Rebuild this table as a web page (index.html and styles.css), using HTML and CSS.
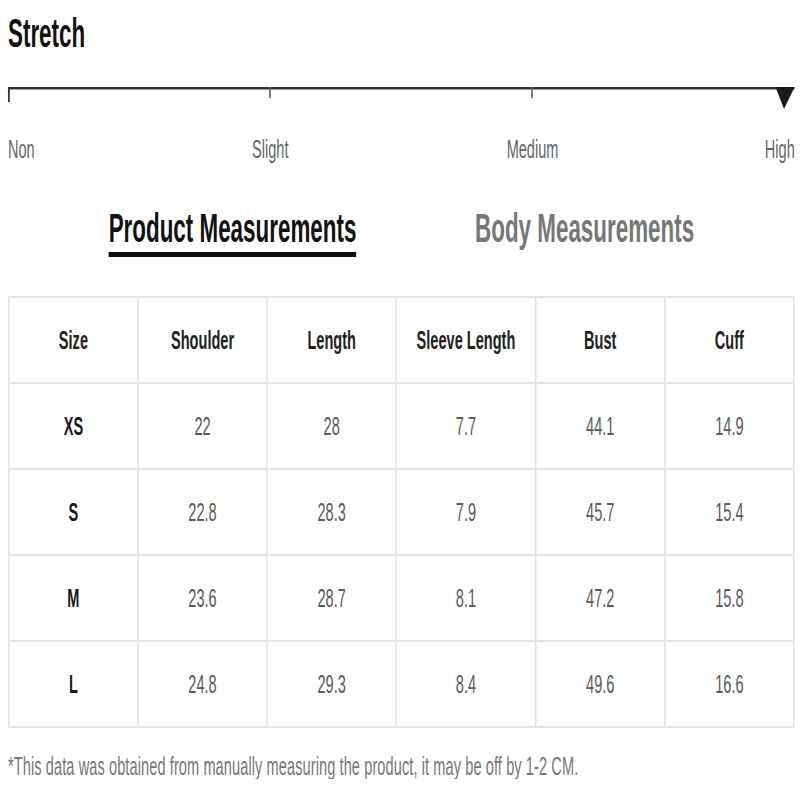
FILE: index.html
```html
<!DOCTYPE html>
<html lang="en">
<head>
<meta charset="utf-8">
<title>Size Chart</title>
<link rel="stylesheet" href="styles.css">
</head>
<body>
<div class="page">
  <h1 class="title">Stretch</h1>
  <div class="scale">
    <svg class="scale-bar" width="1405" height="24" viewBox="0 0 1405 24">
      <line x1="0" y1="1.25" x2="1405" y2="1.25" stroke="#333" stroke-width="2.5"/>
      <line x1="1.75" y1="0" x2="1.75" y2="15" stroke="#333" stroke-width="3.5"/>
      <line x1="468" y1="0" x2="468" y2="11" stroke="#666" stroke-width="3"/>
      <line x1="936" y1="0" x2="936" y2="11" stroke="#666" stroke-width="3"/>
      <polygon points="1371,0 1405,0 1386,22" fill="#1a1a1a"/>
    </svg>
    <div class="scale-labels">
      <span class="lbl lbl-non">Non</span>
      <span class="lbl lbl-slight">Slight</span>
      <span class="lbl lbl-medium">Medium</span>
      <span class="lbl lbl-high">High</span>
    </div>
  </div>
  <div class="tabs">
    <div class="tab tab-active">Product Measurements</div>
    <div class="tab">Body Measurements</div>
  </div>
  <table class="chart">
    <thead>
      <tr><th>Size</th><th>Shoulder</th><th>Length</th><th>Sleeve Length</th><th>Bust</th><th>Cuff</th></tr>
    </thead>
    <tbody>
      <tr><th>XS</th><td>22</td><td>28</td><td>7.7</td><td>44.1</td><td>14.9</td></tr>
      <tr><th>S</th><td>22.8</td><td>28.3</td><td>7.9</td><td>45.7</td><td>15.4</td></tr>
      <tr><th>M</th><td>23.6</td><td>28.7</td><td>8.1</td><td>47.2</td><td>15.8</td></tr>
      <tr><th>L</th><td>24.8</td><td>29.3</td><td>8.4</td><td>49.6</td><td>16.6</td></tr>
    </tbody>
  </table>
  <p class="note">*This data was obtained from manually measuring the product, it may be off by 1-2 CM.</p>
</div>
</body>
</html>
```

FILE: styles.css
```css
html, body {
  margin: 0;
  padding: 0;
  overflow: hidden;
  background: #fff;
}

.page {
  width: 1428px;
  box-sizing: border-box;
  padding: 13px 0 0 14.3px;
  transform: scaleX(0.56);
  transform-origin: 0 0;
  font-family: "Liberation Sans", Arial, sans-serif;
}

.title {
  margin: 0;
  font-size: 40px;
  line-height: 40px;
  font-weight: 700;
  color: #111;
}

.scale {
  width: 1405px;
  margin-top: 34px;
}

.scale-bar {
  display: block;
}

.scale-labels {
  display: grid;
  grid-template-columns: repeat(6, 1fr);
  margin-top: 25px;
  font-size: 26px;
  line-height: 26px;
  color: #666;
}

.lbl-non { grid-column: 1; text-align: left; }
.lbl-slight { grid-column: 2 / span 2; text-align: center; }
.lbl-medium { grid-column: 4 / span 2; text-align: center; }
.lbl-high { grid-column: 6; text-align: right; }

.tabs {
  width: 1405px;
  display: flex;
  justify-content: center;
  align-items: flex-start;
  gap: 212px;
  margin-top: 46px;
}

.tab {
  font-size: 40px;
  line-height: 40px;
  font-weight: 700;
  color: #777;
  padding-bottom: 4px;
  border-bottom: 5px solid transparent;
}

.tab-active {
  color: #111;
  border-bottom-color: #111;
}

.chart {
  width: 1405px;
  margin-top: 39px;
  border-collapse: collapse;
  table-layout: fixed;
  font-size: 26px;
}

.chart th,
.chart td {
  height: 84px;
  padding: 0;
  text-align: center;
  vertical-align: middle;
  border-top: 2px solid #e2e2e2;
  border-bottom: 2px solid #e2e2e2;
  border-left: 3.5px solid #e2e2e2;
  border-right: 3.5px solid #e2e2e2;
}

.chart th:nth-child(4) {
  width: 246px;
}

.chart thead th {
  font-weight: 700;
  color: #222;
}

.chart tbody th {
  font-weight: 700;
  color: #1a1a1a;
}

.chart td {
  color: #5a5a5a;
}

.note {
  margin: 25px 0 0;
  font-size: 26px;
  line-height: 26px;
  letter-spacing: 0.17px;
  color: #777;
}
```
